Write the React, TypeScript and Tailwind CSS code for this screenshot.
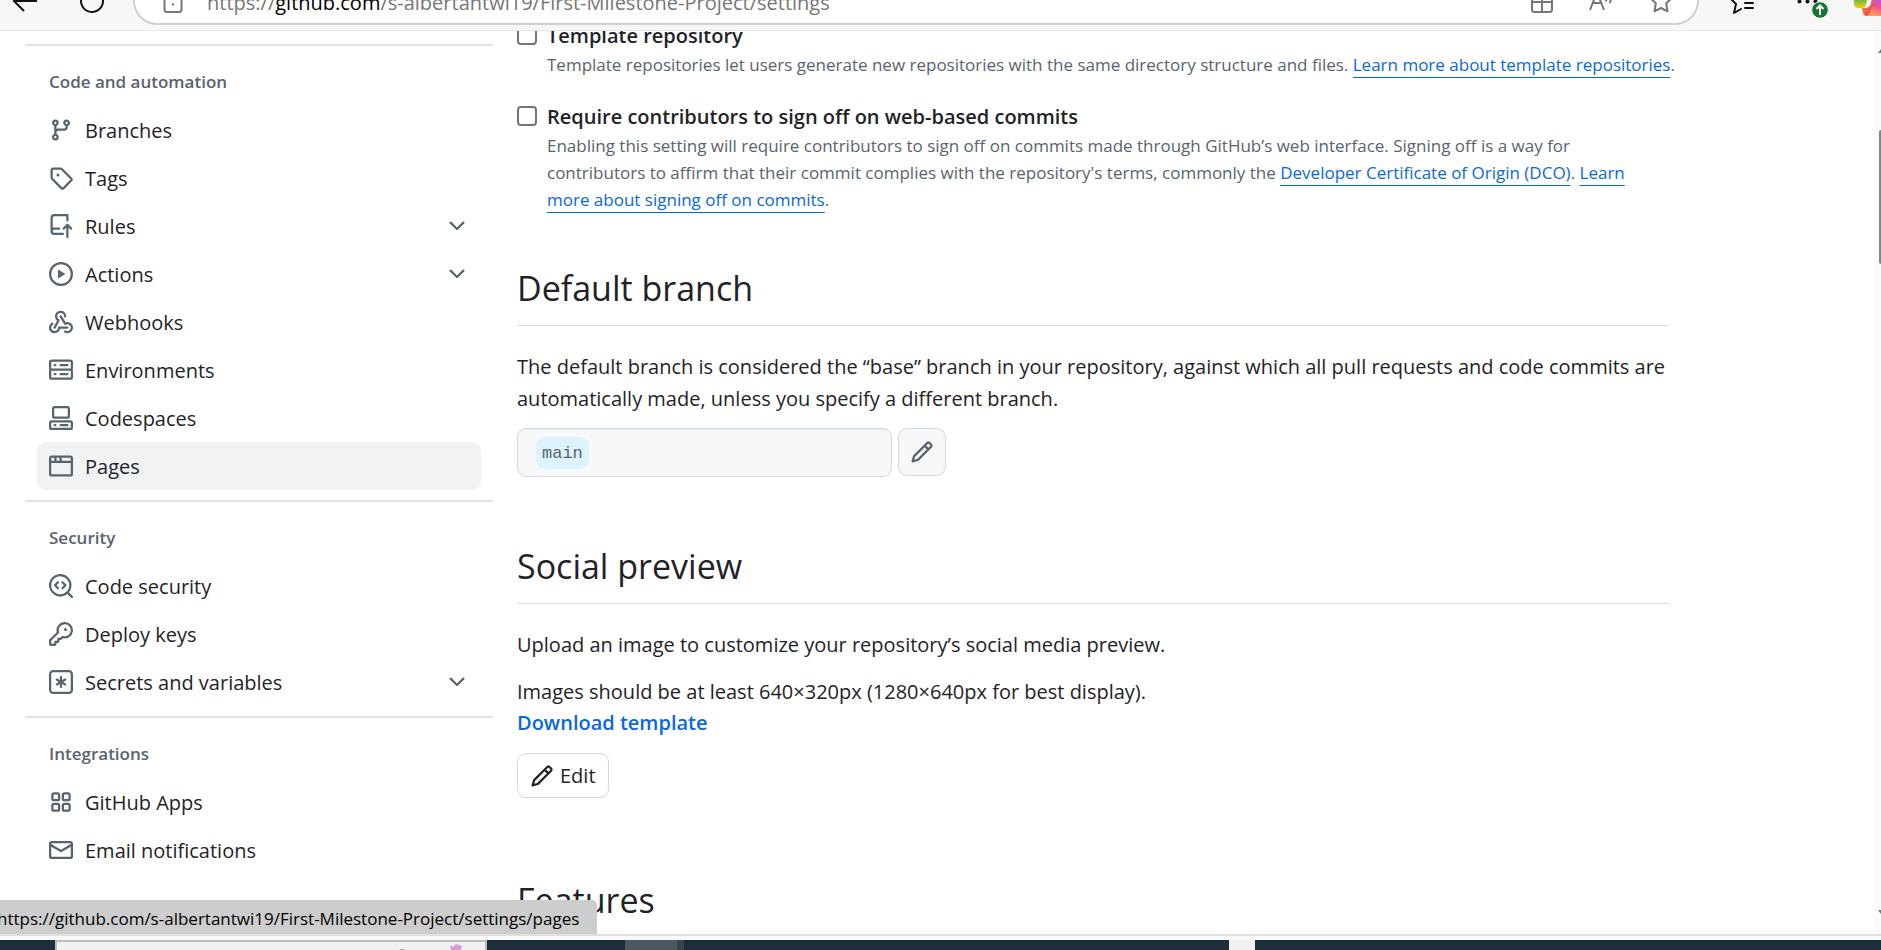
import React from 'react';

type IconProps = { d: string[]; className?: string };

function Icon({ d, className = 'size-6' }: IconProps) {
  return (
    <svg viewBox="0 0 16 16" fill="currentColor" aria-hidden="true" className={`${className} shrink-0`}>
      {d.map((path) => (
        <path key={path} d={path} />
      ))}
    </svg>
  );
}

const icons = {
  branch: [
    'M9.5 3.25a2.25 2.25 0 1 1 3 2.122V6A2.5 2.5 0 0 1 10 8.5H6a1 1 0 0 0-1 1v1.128a2.251 2.251 0 1 1-1.5 0V5.372a2.25 2.25 0 1 1 1.5 0v1.836A2.493 2.493 0 0 1 6 7h4a1 1 0 0 0 1-1v-.628A2.25 2.25 0 0 1 9.5 3.25Zm-6 0a.75.75 0 1 0 1.5 0 .75.75 0 0 0-1.5 0Zm8.25-.75a.75.75 0 1 0 0 1.5.75.75 0 0 0 0-1.5ZM4.25 12a.75.75 0 1 0 0 1.5.75.75 0 0 0 0-1.5Z',
  ],
  tag: [
    'M1 7.775V2.75C1 1.784 1.784 1 2.75 1h5.025c.464 0 .91.184 1.238.513l6.25 6.25a1.75 1.75 0 0 1 0 2.474l-5.026 5.026a1.75 1.75 0 0 1-2.474 0l-6.25-6.25A1.752 1.752 0 0 1 1 7.775Zm1.5 0c0 .066.026.13.073.177l6.25 6.25a.25.25 0 0 0 .354 0l5.025-5.025a.25.25 0 0 0 0-.354l-6.25-6.25a.25.25 0 0 0-.177-.073H2.75a.25.25 0 0 0-.25.25ZM6 5a1 1 0 1 1 0 2 1 1 0 0 1 0-2Z',
  ],
  rules: [
    'M1 2.5A2.5 2.5 0 0 1 3.5 0h8.75a.75.75 0 0 1 .75.75v3.5a.75.75 0 0 1-1.5 0V1.5h-8a1 1 0 0 0-1 1v6.708A2.493 2.493 0 0 1 3.5 9h3.25a.75.75 0 0 1 0 1.5H3.5a1 1 0 0 0 0 2h5.75a.75.75 0 0 1 0 1.5H3.5A2.5 2.5 0 0 1 1 11.5Zm13.23 7.79h-.001l-1.224-1.224v6.184a.75.75 0 0 1-1.5 0V9.066L10.28 10.29a.75.75 0 0 1-1.06-1.061l2.505-2.504a.75.75 0 0 1 1.06 0L15.29 9.23a.751.751 0 0 1-.018 1.042.751.751 0 0 1-1.042.018Z',
  ],
  play: [
    'M8 0a8 8 0 1 1 0 16A8 8 0 0 1 8 0ZM1.5 8a6.5 6.5 0 1 0 13 0 6.5 6.5 0 0 0-13 0Zm4.879-2.773 4.264 2.559a.25.25 0 0 1 0 .428l-4.264 2.559A.25.25 0 0 1 6 10.559V5.442a.25.25 0 0 1 .379-.215Z',
  ],
  webhook: [
    'M5.5 4.25a2.25 2.25 0 0 1 4.5 0 .75.75 0 0 0 1.5 0 3.75 3.75 0 1 0-6.14 2.889l-2.272 4.258a.75.75 0 0 0 1.324.706L7 7.25a.75.75 0 0 0-.309-1.015A2.25 2.25 0 0 1 5.5 4.25Z',
    'M7.364 3.607a.75.75 0 0 1 1.03.257l2.608 4.349a3.75 3.75 0 1 1-.628 6.785.75.75 0 0 1 .752-1.299 2.25 2.25 0 1 0-.033-3.88.75.75 0 0 1-1.03-.256L7.107 4.636a.75.75 0 0 1 .257-1.03Z',
    'M2.9 8.776A.75.75 0 0 1 2.625 9.8 2.25 2.25 0 1 0 6 11.75a.75.75 0 0 1 .75-.751h5.5a.75.75 0 0 1 0 1.5H7.425a3.751 3.751 0 1 1-5.55-3.998.75.75 0 0 1 1.024.274Z',
  ],
  server: [
    'M1.75 1h12.5c.966 0 1.75.784 1.75 1.75v4c0 .372-.116.717-.314 1 .198.283.314.628.314 1v4a1.75 1.75 0 0 1-1.75 1.75H1.75A1.75 1.75 0 0 1 0 12.75v-4c0-.358.109-.707.314-1a1.739 1.739 0 0 1-.314-1v-4C0 1.784.784 1 1.75 1ZM1.5 2.75v4c0 .138.112.25.25.25h12.5a.25.25 0 0 0 .25-.25v-4a.25.25 0 0 0-.25-.25H1.75a.25.25 0 0 0-.25.25Zm.25 5.75a.25.25 0 0 0-.25.25v4c0 .138.112.25.25.25h12.5a.25.25 0 0 0 .25-.25v-4a.25.25 0 0 0-.25-.25ZM7 4.75A.75.75 0 0 1 7.75 4h4.5a.75.75 0 0 1 0 1.5h-4.5A.75.75 0 0 1 7 4.75ZM7.75 10h4.5a.75.75 0 0 1 0 1.5h-4.5a.75.75 0 0 1 0-1.5ZM3 4.75A.75.75 0 0 1 3.75 4h.5a.75.75 0 0 1 0 1.5h-.5A.75.75 0 0 1 3 4.75ZM3.75 10h.5a.75.75 0 0 1 0 1.5h-.5a.75.75 0 0 1 0-1.5Z',
  ],
  codespaces: [
    'M0 11.25c0-.966.784-1.75 1.75-1.75h12.5c.966 0 1.75.784 1.75 1.75v3A1.75 1.75 0 0 1 14.25 16H1.75A1.75 1.75 0 0 1 0 14.25Zm2-9.5C2 .784 2.784 0 3.75 0h8.5C13.216 0 14 .784 14 1.75v5a1.75 1.75 0 0 1-1.75 1.75h-8.5A1.75 1.75 0 0 1 2 6.75Zm1.75-.25a.25.25 0 0 0-.25.25v5c0 .138.112.25.25.25h8.5a.25.25 0 0 0 .25-.25v-5a.25.25 0 0 0-.25-.25Zm-2 9.5a.25.25 0 0 0-.25.25v3c0 .138.112.25.25.25h12.5a.25.25 0 0 0 .25-.25v-3a.25.25 0 0 0-.25-.25Z',
    'M7 12.75a.75.75 0 0 1 .75-.75h4.5a.75.75 0 0 1 0 1.5h-4.5a.75.75 0 0 1-.75-.75Zm-4 0a.75.75 0 0 1 .75-.75h.5a.75.75 0 0 1 0 1.5h-.5a.75.75 0 0 1-.75-.75Z',
  ],
  browser: [
    'M0 2.75C0 1.784.784 1 1.75 1h12.5c.966 0 1.75.784 1.75 1.75v10.5A1.75 1.75 0 0 1 14.25 15H1.75A1.75 1.75 0 0 1 0 13.25ZM14.5 6h-13v7.25c0 .138.112.25.25.25h12.5a.25.25 0 0 0 .25-.25Zm-6-3.5v2h6V2.75a.25.25 0 0 0-.25-.25ZM5 2.5v2h2v-2Zm-3.25 0a.25.25 0 0 0-.25.25V4.5h2v-2Z',
  ],
  codescan: [
    'M8.47 4.97a.75.75 0 0 0 0 1.06L9.94 7.5 8.47 8.97a.75.75 0 1 0 1.06 1.06l2-2a.75.75 0 0 0 0-1.06l-2-2a.75.75 0 0 0-1.06 0ZM6.53 6.03a.75.75 0 0 0-1.06-1.06l-2 2a.75.75 0 0 0 0 1.06l2 2a.75.75 0 1 0 1.06-1.06L5.06 7.5l1.47-1.47Z',
    'M12.246 13.307a7.501 7.501 0 1 1 1.06-1.06l2.474 2.473a.749.749 0 0 1-.326 1.275.749.749 0 0 1-.734-.215ZM1.5 7.5a6.002 6.002 0 0 0 3.608 5.504 6.002 6.002 0 0 0 6.486-1.117.748.748 0 0 1 .292-.293A6 6 0 1 0 1.5 7.5Z',
  ],
  key: [
    'M10.5 0a5.499 5.499 0 1 1-1.288 10.848l-.932.932a.749.749 0 0 1-.53.22H7v.75a.749.749 0 0 1-.22.53l-.5.5a.749.749 0 0 1-.53.22H5v.75a.749.749 0 0 1-.22.53l-.5.5a.749.749 0 0 1-.53.22h-2A1.75 1.75 0 0 1 0 14.25v-2c0-.199.079-.389.22-.53l4.932-4.932A5.5 5.5 0 0 1 10.5 0Zm-4 5.5c-.001.431.069.86.205 1.269a.75.75 0 0 1-.181.768L1.5 12.56v1.69c0 .138.112.25.25.25h1.69l.06-.06v-1.19a.75.75 0 0 1 .75-.75h1.19l.06-.06v-1.19a.75.75 0 0 1 .75-.75h1.19l1.023-1.025a.75.75 0 0 1 .768-.18A4 4 0 1 0 6.5 5.5ZM11 6a1 1 0 1 1 0-2 1 1 0 0 1 0 2Z',
  ],
  asterisk: [
    'M0 2.75A2.75 2.75 0 0 1 2.75 0h10.5A2.75 2.75 0 0 1 16 2.75v10.5A2.75 2.75 0 0 1 13.25 16H2.75A2.75 2.75 0 0 1 0 13.25ZM2.75 1.5c-.69 0-1.25.56-1.25 1.25v10.5c0 .69.56 1.25 1.25 1.25h10.5c.69 0 1.25-.56 1.25-1.25V2.75c0-.69-.56-1.25-1.25-1.25Z',
    'M8 4a.75.75 0 0 1 .75.75V6.7l1.69-.975a.75.75 0 0 1 .75 1.3L9.5 8l1.69.976a.75.75 0 0 1-.75 1.298L8.75 9.3v1.951a.75.75 0 0 1-1.5 0V9.299l-1.69.976a.75.75 0 0 1-.75-1.3L6.5 8l-1.69-.975a.75.75 0 0 1 .75-1.3l1.69.976V4.75A.75.75 0 0 1 8 4Z',
  ],
  apps: [
    'M1.5 3.25c0-.966.784-1.75 1.75-1.75h2.5c.966 0 1.75.784 1.75 1.75v2.5A1.75 1.75 0 0 1 5.75 7.5h-2.5A1.75 1.75 0 0 1 1.5 5.75Zm7 0c0-.966.784-1.75 1.75-1.75h2.5c.966 0 1.75.784 1.75 1.75v2.5a1.75 1.75 0 0 1-1.75 1.75h-2.5A1.75 1.75 0 0 1 8.5 5.75Zm-7 7c0-.966.784-1.75 1.75-1.75h2.5c.966 0 1.75.784 1.75 1.75v2.5a1.75 1.75 0 0 1-1.75 1.75h-2.5a1.75 1.75 0 0 1-1.75-1.75Zm7 0c0-.966.784-1.75 1.75-1.75h2.5c.966 0 1.75.784 1.75 1.75v2.5a1.75 1.75 0 0 1-1.75 1.75h-2.5a1.75 1.75 0 0 1-1.75-1.75ZM3.25 3a.25.25 0 0 0-.25.25v2.5c0 .138.112.25.25.25h2.5A.25.25 0 0 0 6 5.75v-2.5A.25.25 0 0 0 5.75 3Zm7 0a.25.25 0 0 0-.25.25v2.5c0 .138.112.25.25.25h2.5a.25.25 0 0 0 .25-.25v-2.5a.25.25 0 0 0-.25-.25Zm-7 7a.25.25 0 0 0-.25.25v2.5c0 .138.112.25.25.25h2.5a.25.25 0 0 0 .25-.25v-2.5a.25.25 0 0 0-.25-.25Zm7 0a.25.25 0 0 0-.25.25v2.5c0 .138.112.25.25.25h2.5a.25.25 0 0 0 .25-.25v-2.5a.25.25 0 0 0-.25-.25Z',
  ],
  mail: [
    'M1.75 2h12.5c.966 0 1.75.784 1.75 1.75v8.5A1.75 1.75 0 0 1 14.25 14H1.75A1.75 1.75 0 0 1 0 12.25v-8.5C0 2.784.784 2 1.75 2ZM1.5 12.251c0 .138.112.25.25.25h12.5a.25.25 0 0 0 .25-.25V5.809L8.38 9.397a.75.75 0 0 1-.76 0L1.5 5.809v6.442Zm13-8.181v-.32a.25.25 0 0 0-.25-.25H1.75a.25.25 0 0 0-.25.25v.32L8 7.88Z',
  ],
  pencil: [
    'M11.013 1.427a1.75 1.75 0 0 1 2.474 0l1.086 1.086a1.75 1.75 0 0 1 0 2.474l-8.61 8.61c-.21.21-.47.364-.756.445l-3.251.93a.75.75 0 0 1-.927-.928l.929-3.25c.081-.286.235-.547.445-.758l8.61-8.61Zm.176 4.823L9.75 4.81l-6.286 6.287a.253.253 0 0 0-.064.108l-.558 1.953 1.953-.558a.253.253 0 0 0 .108-.064Zm1.238-3.763a.25.25 0 0 0-.354 0L10.811 3.75l1.439 1.44 1.263-1.263a.25.25 0 0 0 0-.354Z',
  ],
  chevron: [
    'M12.78 5.22a.749.749 0 0 1 0 1.06l-4.25 4.25a.749.749 0 0 1-1.06 0L3.22 6.28a.749.749 0 1 1 1.06-1.06L8 8.939l3.72-3.719a.749.749 0 0 1 1.06 0Z',
  ],
};

type Item = { label: string; icon: string[]; expandable?: boolean; active?: boolean };

const groups: { title: string; items: Item[] }[] = [
  {
    title: 'Code and automation',
    items: [
      { label: 'Branches', icon: icons.branch },
      { label: 'Tags', icon: icons.tag },
      { label: 'Rules', icon: icons.rules, expandable: true },
      { label: 'Actions', icon: icons.play, expandable: true },
      { label: 'Webhooks', icon: icons.webhook },
      { label: 'Environments', icon: icons.server },
      { label: 'Codespaces', icon: icons.codespaces },
      { label: 'Pages', icon: icons.browser, active: true },
    ],
  },
  {
    title: 'Security',
    items: [
      { label: 'Code security', icon: icons.codescan },
      { label: 'Deploy keys', icon: icons.key },
      { label: 'Secrets and variables', icon: icons.asterisk, expandable: true },
    ],
  },
  {
    title: 'Integrations',
    items: [
      { label: 'GitHub Apps', icon: icons.apps },
      { label: 'Email notifications', icon: icons.mail },
    ],
  },
];

function NavItem({ item }: { item: Item }) {
  const row = 'flex h-12 w-full items-center gap-3 rounded-[9px] px-3 text-left text-[20px] text-[#1f2328]';
  const content = (
    <>
      <span className="text-[#59636e]">
        <Icon d={item.icon} />
      </span>
      <span className="flex-1 pt-0.5">{item.label}</span>
      {item.expandable && (
        <span className="text-[#59636e]">
          <Icon d={icons.chevron} />
        </span>
      )}
    </>
  );
  return (
    <li>
      {item.expandable ? (
        <button type="button" aria-expanded="false" className={row}>
          {content}
        </button>
      ) : (
        <a href="#" className={item.active ? `${row} bg-[#f1f2f4]` : row}>
          {content}
        </a>
      )}
    </li>
  );
}

function Sidebar() {
  return (
    <nav aria-label="Repository settings" className="mt-[13px] w-[468px] shrink-0">
      {groups.map((group) => (
        <section key={group.title} className="border-t-2 border-[#dfe3e8] px-3 pt-3 pb-[10px]">
          <h3 className="flex h-12 items-center px-3 text-[17px] font-semibold text-[#59636e]">{group.title}</h3>
          <ul>
            {group.items.map((item) => (
              <NavItem key={item.label} item={item} />
            ))}
          </ul>
        </section>
      ))}
    </nav>
  );
}

function TextLink({ children }: { children: React.ReactNode }) {
  return (
    <a href="#" className="text-[#0969da] underline decoration-1 underline-offset-[6px]">
      {children}
    </a>
  );
}

type CheckSettingProps = { id: string; label: string; wide?: boolean; children: React.ReactNode };

function CheckSetting({ id, label, wide, children }: CheckSettingProps) {
  return (
    <div className={wide ? '-mr-4 flex gap-[10px]' : 'flex gap-[10px]'}>
      <input
        id={id}
        type="checkbox"
        className="mt-[5px] size-5 shrink-0 appearance-none rounded-[4px] border-2 border-[#767676] bg-white"
      />
      <div>
        <label htmlFor={id} className="block text-[20px] leading-[31px] font-semibold text-[#1f2328]">
          {label}
        </label>
        <p className="text-[17px] leading-[27px] text-[#59636e]">{children}</p>
      </div>
    </div>
  );
}

function Heading({ children }: { children: React.ReactNode }) {
  return (
    <h2 className="border-b border-[#d9dee3] pb-2 text-[34px] leading-[58px] text-[#1f2328]">{children}</h2>
  );
}

function Toolbar() {
  return (
    <header className="flex h-[31px] shrink-0 items-end overflow-hidden border-b border-[#e5e5e5] bg-[#f7f7f7] pb-[5px]">
      <div className="flex h-12 w-[133px] shrink-0 items-center justify-between pr-7 pl-3">
        <button type="button" aria-label="Back">
          <svg viewBox="0 0 26 26" className="size-[26px]" fill="none" stroke="#111" strokeWidth="2">
            <path d="M25 13H2M12 3 2 13l10 10" />
          </svg>
        </button>
        <button type="button" aria-label="Refresh">
          <svg viewBox="0 0 26 26" className="size-[26px]" fill="none" stroke="#111" strokeWidth="2">
            <path d="M20 4.500A11 11 0 1 1 13 2" />
          </svg>
        </button>
      </div>
      <div className="flex h-12 flex-1 items-center rounded-full border-2 border-[#d1d1d1] bg-white pr-6 pl-7 text-[#767676]">
        <svg viewBox="0 0 20 24" className="mr-6 h-6 w-5 shrink-0" fill="none" stroke="currentColor" strokeWidth="2">
          <rect x="1.500" y="8" width="17" height="15" rx="2.500" />
          <path d="M6 8V5a4 4 0 0 1 8 0v3" />
          <circle cx="10" cy="15.500" r="1.200" fill="currentColor" stroke="none" />
        </svg>
        <p className="flex-1 pt-1 text-[20px] leading-7 whitespace-nowrap">
          https://<span className="text-black">github.com</span>/s-albertantwi19/First-Milestone-Project/settings
        </p>
        <div className="flex items-center gap-9">
          <button type="button" aria-label="Split screen">
            <svg viewBox="0 0 22 24" className="h-6 w-[22px]" fill="none" stroke="currentColor" strokeWidth="2">
              <rect x="1" y="3" width="20" height="20" rx="2.500" />
              <path d="M11 3v20M1 13h20" />
            </svg>
          </button>
          <button type="button" aria-label="Read aloud">
            <svg viewBox="0 0 24 24" className="size-6" fill="none" stroke="currentColor" strokeWidth="2">
              <path d="m1 21 7-18 7 18M4 14h8M16.500 7q2 2.500 0 5.500M20.500 5q3 4.500 0 9" />
            </svg>
          </button>
          <button type="button" aria-label="Add to favorites">
            <svg viewBox="0 0 24 24" className="size-6" fill="none" stroke="currentColor" strokeWidth="2" strokeLinejoin="round">
              <path d="m12 1.500 3.200 6.700 7.300 1-5.300 5.100 1.300 8L12 19l-6.500 3.300 1.300-8L1.500 9.200l7.300-1z" />
            </svg>
          </button>
        </div>
      </div>
      <div className="flex h-12 w-[182px] shrink-0 items-center pl-[29px]">
        <button type="button" aria-label="Favorites">
          <svg viewBox="0 0 26 26" className="size-[26px]" fill="none" stroke="#111" strokeWidth="2" strokeLinejoin="round" strokeLinecap="round">
            <path d="m20 9-5-1-4-7-3 7-7 1 7 7-2 9 7-4M17 15h8M17 20h8" />
          </svg>
        </button>
        <button type="button" aria-label="More, update available" className="relative ml-[41px]">
          <svg viewBox="0 0 34 26" className="h-[26px] w-[34px]" fill="#111">
            <circle cx="4.500" cy="13.500" r="2" />
            <circle cx="12.500" cy="13.500" r="2" />
            <circle cx="20.500" cy="13.500" r="2" />
          </svg>
          <svg viewBox="0 0 18 18" className="absolute top-[13px] left-4 size-[18px]" fill="none" stroke="white" strokeWidth="2">
            <circle cx="9" cy="9" r="8.300" fill="#13772f" stroke="#f7f7f7" strokeWidth="1" />
            <path d="M9 14V4.500M5.500 8 9 4.500 12.500 8" />
          </svg>
        </button>
        <button type="button" aria-label="Copilot" className="ml-6">
          <svg viewBox="0 0 28 32" className="h-8 w-7">
            <defs>
              <linearGradient id="copilot-left" x1="0" y1="0" x2="0" y2="1">
                <stop offset="0.500" stopColor="#5fb04a" />
                <stop offset="0.750" stopColor="#a9c228" />
                <stop offset="1" stopColor="#f6cf00" />
              </linearGradient>
              <linearGradient id="copilot-right" x1="0.600" y1="0.300" x2="0.500" y2="1">
                <stop offset="0" stopColor="#b557d3" />
                <stop offset="0.500" stopColor="#ee5590" />
                <stop offset="1" stopColor="#ffa65c" />
              </linearGradient>
              <linearGradient id="copilot-fold" x1="0" y1="0" x2="1" y2="1">
                <stop offset="0" stopColor="#f58a3c" />
                <stop offset="1" stopColor="#e3403c" />
              </linearGradient>
            </defs>
            <path d="M2 4h14l-3 16q-1 3-4 3H5q-4 0-4-5z" fill="url(#copilot-left)" />
            <path d="M19 4h9v27H13q4-1 5-6z" fill="url(#copilot-right)" />
            <path d="M9 23h4q4 0 6-7l2 1-4 11q-1 3-4 3-2 0-3-3z" fill="url(#copilot-fold)" />
          </svg>
        </button>
      </div>
    </header>
  );
}

function Scrollbar() {
  return (
    <div aria-hidden="true" className="flex w-[7px] shrink-0 flex-col items-end bg-[#fbfbfb] pt-[18px] pb-5 text-[#777]">
      <svg viewBox="0 0 3 4" className="h-1 w-[3px]" fill="currentColor">
        <path d="M3 0v4H0z" />
      </svg>
      <div className="mt-[77px] h-[134px] w-[2px] rounded-l-full bg-[#858585]" />
      <div className="flex-1" />
      <svg viewBox="0 0 3 4" className="h-1 w-[3px]" fill="currentColor">
        <path d="M0 0h3v4z" />
      </svg>
    </div>
  );
}

function Taskbar() {
  return (
    <footer className="flex h-[10px] shrink-0 bg-[#1c2e3a]">
      <div className="w-[55px]" />
      <div className="flex w-[432px] justify-end border-2 border-b-0 border-[#bdbdbd] bg-[#f1f1f1]">
        <svg viewBox="0 0 64 8" className="mr-[22px] h-2 w-16">
          <path d="M0 8q3-2 6 0z" fill="#999" />
          <path d="m51 3 3 2 3-3 6 2-1 4H52z" fill="#d99bdc" />
        </svg>
      </div>
      <div className="w-[138px]" />
      <div className="w-[52px] bg-[#4b5862]" />
      <div className="w-[7px] bg-[#34444f]" />
      <div className="w-[545px]" />
      <div className="w-[26px] bg-[#f0f0f0]" />
    </footer>
  );
}

export default function App() {
  return (
    <div className="flex h-screen flex-col overflow-hidden bg-white font-['Open_Sans','Noto_Sans',sans-serif]">
      <Toolbar />
      <div className="relative flex min-h-0 flex-1">
        <div className="flex min-w-0 flex-1 gap-6 overflow-hidden pl-[25px]">
          <Sidebar />
          <main className="-mt-[11px] max-w-[1152px] flex-1 text-[20px] leading-8 text-[#1f2328]">
            <div className="flex flex-col gap-[23px]">
              <CheckSetting id="template" label="Template repository" wide>
                Template repositories let users generate new repositories with the same directory structure and files.{' '}
                <TextLink>Learn more about template repositories</TextLink>.
              </CheckSetting>
              <CheckSetting id="signoff" label="Require contributors to sign off on web-based commits">
                Enabling this setting will require contributors to sign off on commits made through GitHub’s web
                interface. Signing off is a way for contributors to affirm that their commit complies with the
                repository's terms, commonly the <TextLink>Developer Certificate of Origin (DCO)</TextLink>.{' '}
                <TextLink>Learn more about signing off on commits</TextLink>.
              </CheckSetting>
            </div>

            <section className="mt-[46px]">
              <Heading>Default branch</Heading>
              <p className="mt-[25px]">
                The default branch is considered the “base” branch in your repository, against which all pull requests
                and code commits are automatically made, unless you specify a different branch.
              </p>
              <div className="mt-[13px] flex gap-[6px]">
                <div className="flex h-[49px] w-[375px] items-center rounded-[9px] border border-[#d1d9e0] bg-[#f6f8fa] px-[18px] shadow-[inset_0_1px_1px_rgba(31,35,40,0.06)]">
                  <code className="rounded-[9px] bg-[#ddf4ff] px-[6px] pt-0.5 font-['Liberation_Mono',monospace] text-[17px] leading-[30px] text-[#59636e]">
                    main
                  </code>
                </div>
                <button
                  type="button"
                  aria-label="Rename branch"
                  className="flex size-12 items-center justify-center rounded-[9px] border border-[#d1d9e0] bg-[#f6f8fa] text-[#59636e]"
                >
                  <Icon d={icons.pencil} />
                </button>
              </div>
            </section>

            <section className="mt-[60px]">
              <Heading>Social preview</Heading>
              <p className="mt-[25px]">Upload an image to customize your repository’s social media preview.</p>
              <p className="mt-[15px] leading-[31px]">
                Images should be at least 640×320px (1280×640px for best display).
                <br />
                <a href="#" className="font-semibold text-[#0969da]">
                  Download template
                </a>
              </p>
              <button
                type="button"
                className="mt-[15px] flex h-[45px] items-center gap-[6px] rounded-[9px] border border-[#d1d9e0] px-3"
              >
                <Icon d={icons.pencil} />
                Edit
              </button>
            </section>

            <section className="mt-[73px]">
              <Heading>Features</Heading>
            </section>
          </main>
        </div>
        <Scrollbar />
        <div className="absolute bottom-0 left-0 flex h-[34px] min-w-[597px] items-center rounded-tr-[5px] bg-[#cdcdcd] pt-[3px] pr-[10px] text-[17px] text-black">
          <span className="-ml-[3px]">https://github.com/s-albertantwi19/First-Milestone-Project/settings/pages</span>
        </div>
      </div>
      <div className="h-[6px] shrink-0 border-t-2 border-[#e0e0e0] bg-[#f9f9f9]" />
      <Taskbar />
    </div>
  );
}
